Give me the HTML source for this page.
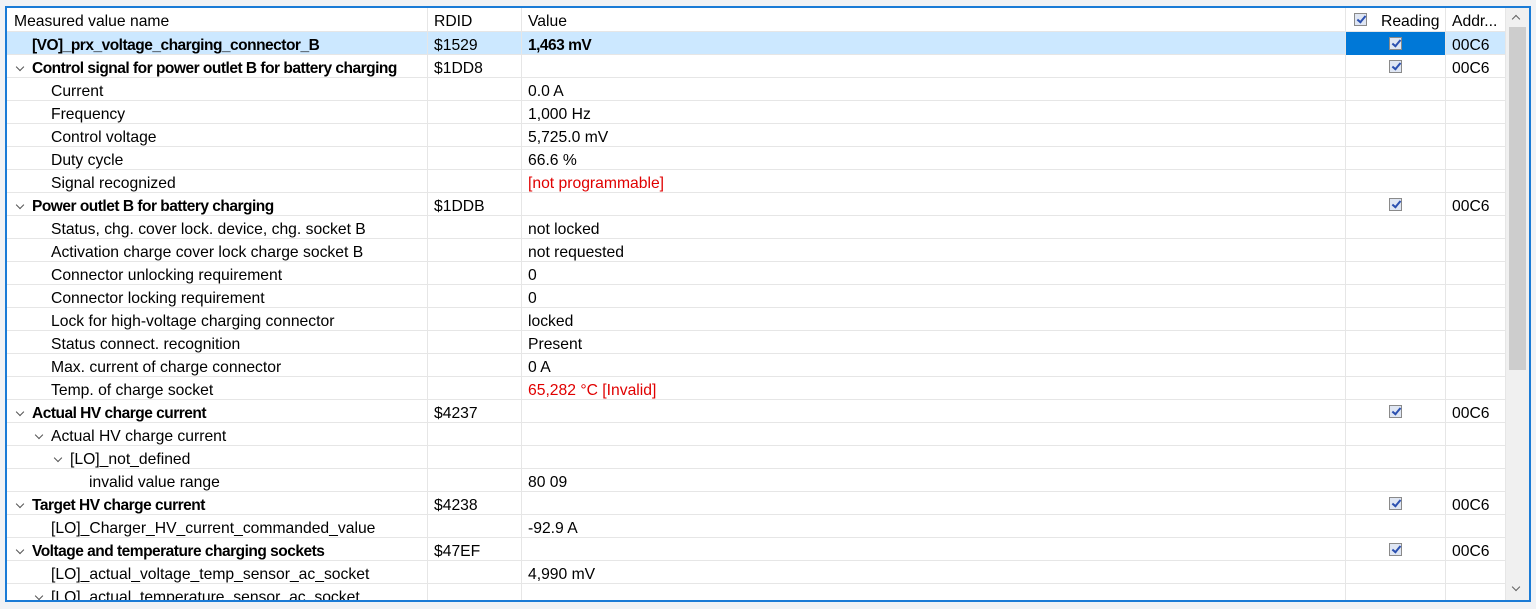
<!DOCTYPE html><html><head><style>
body{margin:0;width:1536px;height:609px;background:#f0f2f5;font-family:"Liberation Sans",sans-serif;font-size:15.7px;color:#000;overflow:hidden;position:relative}
#f{position:absolute;left:5px;top:6px;width:1522px;height:592px;border:2px solid #1a7bd6;background:#fff;overflow:hidden}
.r{position:absolute;left:0;width:1499px;height:23px;border-bottom:1px solid #e6e6e6;box-sizing:border-box}
.c{position:absolute;top:0;height:23px;line-height:27px;white-space:nowrap;overflow:hidden;border-right:1px solid #e6e6e6;box-sizing:border-box}
.n{left:0;width:421px}.d{left:421px;width:94px;padding-left:6px}.v{left:515px;width:824px;padding-left:6px}.g{left:1339px;width:100px;text-align:center}.a{left:1439px;width:60px;padding-left:6px}
.b{font-weight:bold;font-size:15.5px;letter-spacing:-0.5px}.red{color:#e00000}
.cb{display:inline-block;width:11px;height:11px;border:1px solid #8a8a8a;background:#dfe6f3;margin-top:5px;position:relative;vertical-align:top}
.cb:after{content:"";position:absolute;left:4px;top:0px;width:3px;height:7px;border:solid #2b50b0;border-width:0 2px 2px 0;transform:rotate(40deg)}
.ch{position:absolute;top:9px;width:5px;height:5px;border:solid #555;border-width:0 1px 1px 0;transform:rotate(45deg)}
#sb{position:absolute;left:1499px;top:0;width:23px;height:592px;background:#f0f0f0}
#th{position:absolute;left:3px;top:19px;width:17px;height:343px;background:#cdcdcd}
</style></head><body><div id="f">
<div class="r" style="top:0;height:24px"><div class="c n" style="padding-left:7px;height:24px">Measured value name</div><div class="c d" style="height:24px">RDID</div><div class="c v" style="height:24px">Value</div><div class="c g" style="text-align:left;padding-left:8px;height:24px"><span class="cb"></span><span style="margin-left:14px">Reading</span></div><div class="c a" style="height:24px">Addr...</div></div>
<div id="rows"></div>
<div id="sb"><div style="position:absolute;left:7px;top:8px;width:5px;height:5px;border:solid #606060;border-width:1px 0 0 1px;transform:rotate(45deg)"></div><div id="th"></div><div style="position:absolute;left:7px;top:576px;width:5px;height:5px;border:solid #606060;border-width:0 1px 1px 0;transform:rotate(45deg)"></div></div>
</div>
<script>
var R=[
[0,0,"[VO]_prx_voltage_charging_connector_B","$1529","1,463 mV",1,1,0,1],
[0,1,"Control signal for power outlet B for battery charging","$1DD8","",1,1],
[1,0,"Current","","0.0 A"],[1,0,"Frequency","","1,000 Hz"],[1,0,"Control voltage","","5,725.0 mV"],[1,0,"Duty cycle","","66.6 %"],[1,0,"Signal recognized","","[not programmable]",0,0,1],
[0,1,"Power outlet B for battery charging","$1DDB","",1,1],
[1,0,"Status, chg. cover lock. device, chg. socket B","","not locked"],[1,0,"Activation charge cover lock charge socket B","","not requested"],[1,0,"Connector unlocking requirement","","0"],[1,0,"Connector locking requirement","","0"],[1,0,"Lock for high-voltage charging connector","","locked"],[1,0,"Status connect. recognition","","Present"],[1,0,"Max. current of charge connector","","0 A"],[1,0,"Temp. of charge socket","","65,282 °C [Invalid]",0,0,1],
[0,1,"Actual HV charge current","$4237","",1,1],[1,1,"Actual HV charge current","",""],[2,1,"[LO]_not_defined","",""],[3,0,"invalid value range","","80 09"],
[0,1,"Target HV charge current","$4238","",1,1],[1,0,"[LO]_Charger_HV_current_commanded_value","","-92.9 A"],
[0,1,"Voltage and temperature charging sockets","$47EF","",1,1],[1,0,"[LO]_actual_voltage_temp_sensor_ac_socket","","4,990 mV"],[1,1,"[LO]_actual_temperature_sensor_ac_socket","",""]];
var h="";R.forEach(function(x,i){var t=24+i*23,lv=x[0],b=lv==0&&x[5];
var bg=x[8]?"background:#cce8ff;":"";
h+='<div class="r" style="top:'+t+'px;'+bg+'"><div class="c n'+(b?' b':'')+'" style="padding-left:'+(25+lv*19)+'px">'+(x[1]?'<span class="ch" style="left:'+(10+lv*19)+'px"></span>':'')+x[2]+'</div><div class="c d">'+x[3]+'</div><div class="c v'+(x[8]?' b':'')+(x[7]?' red':'')+'">'+x[4]+'</div><div class="c g" style="'+(x[8]?'background:#0078d7;':'')+'">'+(x[6]?'<span class="cb"></span>':'')+'</div><div class="c a">'+(x[6]?'00C6':'')+'</div></div>';});
document.getElementById("rows").innerHTML=h;
</script></body></html>
